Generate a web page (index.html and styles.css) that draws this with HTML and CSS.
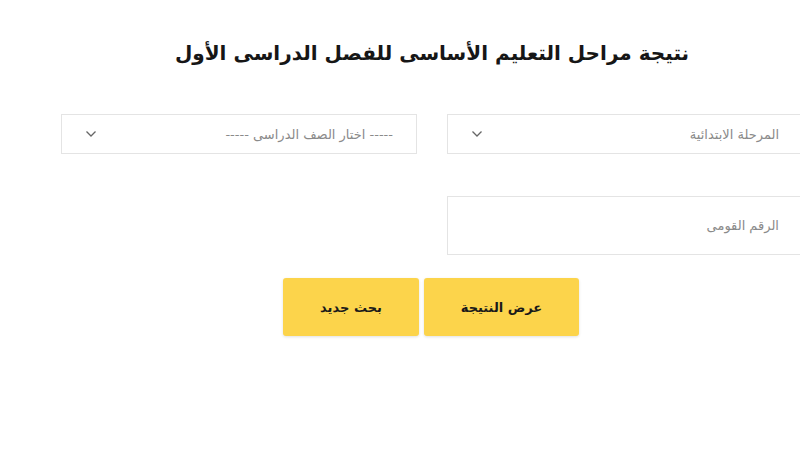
FILE: index.html
```html
<!DOCTYPE html>
<html lang="ar" dir="rtl">
<head>
<meta charset="utf-8">
<link rel="stylesheet" href="styles.css">
</head>
<body>
<div class="page">
  <h1 class="title">نتيجة مراحل التعليم الأساسى للفصل الدراسى الأول</h1>
  <div class="grid">
    <div class="field select">
      <span class="label">المرحلة الابتدائية</span>
      <svg class="chev" viewBox="0 0 12 8" width="12" height="8"><path d="M1.5 1.5 L6 6 L10.5 1.5" fill="none" stroke="#666" stroke-width="1.3"/></svg>
    </div>
    <div class="field select">
      <span class="label">----- اختار الصف الدراسى -----</span>
      <svg class="chev" viewBox="0 0 12 8" width="12" height="8"><path d="M1.5 1.5 L6 6 L10.5 1.5" fill="none" stroke="#666" stroke-width="1.3"/></svg>
    </div>
    <div class="field input">
      <span class="label">الرقم القومى</span>
    </div>
  </div>
  <div class="buttons">
    <button class="btn btn-main">عرض النتيجة</button>
    <button class="btn btn-new">بحث جديد</button>
  </div>
</div>
</body>
</html>
```
FILE: styles.css
```css
html, body {
  margin: 0;
  padding: 0;
  background: #fff;
  overflow: hidden;
}
body {
  width: 800px;
  height: 451px;
  font-family: "DejaVu Sans", "Noto Sans", sans-serif;
}
.page {
  width: 742px;
  margin-right: -3px;
  direction: rtl;
  padding-top: 37px;
}
.title {
  margin: 0;
  text-align: center;
  font-size: 20px;
  font-weight: bold;
  color: #161616;
  line-height: 32px;
  height: 32px;
}
.grid {
  margin-top: 45px;
  display: grid;
  grid-template-columns: 356px 356px;
  column-gap: 30px;
  row-gap: 42px;
}
.field {
  box-sizing: border-box;
  border: 1px solid #e4e4e4;
  background: #fff;
  display: flex;
  align-items: center;
  justify-content: space-between;
  padding: 0 23px 0 23px;
  color: #8a8a8a;
  font-size: 13px;
}
.select {
  height: 40px;
}
.input {
  height: 59px;
}
.chev {
  display: block;
}
.buttons {
  margin-top: 23px;
  display: flex;
  gap: 5px;
  padding-right: 224px;
}
.btn {
  font-family: inherit;
  border: none;
  border-radius: 3px;
  background: #fcd44b;
  color: #1a1a1a;
  font-size: 13px;
  font-weight: bold;
  height: 58px;
  box-shadow: 0 1px 3px rgba(0,0,0,0.12);
  cursor: pointer;
}
.btn-main {
  width: 155px;
}
.btn-new {
  width: 136px;
}
```
